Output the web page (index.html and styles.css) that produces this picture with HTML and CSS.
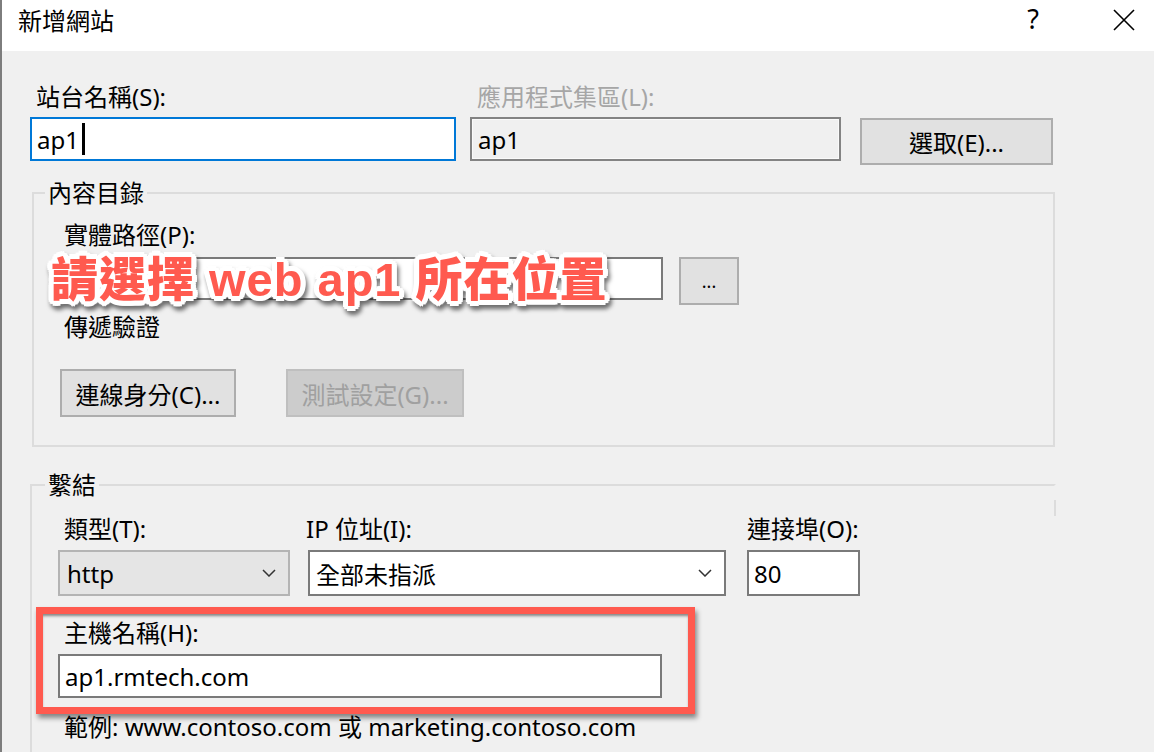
FILE: index.html
```html
<!DOCTYPE html>
<html lang="zh-Hant">
<head>
<meta charset="utf-8">
<title>新增網站</title>
<link rel="stylesheet" href="styles.css">
</head>
<body>
<div class="window">
  <div class="titlebar">
    <span class="title">新增網站</span>
    <div class="title-buttons">
      <span class="help">?</span>
      <span class="close"><svg width="22" height="22" viewBox="0 0 22 22"><path d="M1 1 L21 21 M21 1 L1 21" stroke="#000" stroke-width="1.6" fill="none"/></svg></span>
    </div>
  </div>
  <div class="content">
    <div class="row1">
      <div class="field site-name">
        <div class="lbl">站台名稱(S):</div>
        <div class="textbox focused">ap1<span class="caret"></span></div>
      </div>
      <div class="field app-pool">
        <div class="lbl disabled">應用程式集區(L):</div>
        <div class="textbox readonly">ap1</div>
      </div>
      <div class="btn select-btn">選取(E)...</div>
    </div>

    <fieldset class="group content-dir">
      <legend>內容目錄</legend>
      <div class="group-body">
        <div class="lbl path-lbl">實體路徑(P):</div>
        <div class="path-row">
          <div class="textbox path"></div>
          <div class="btn browse">...</div>
          <div class="callout">請選擇 web ap1 所在位置</div>
        </div>
        <div class="lbl pass-lbl">傳遞驗證</div>
        <div class="btn-row">
          <div class="btn connect">連線身分(C)...</div>
          <div class="btn disabled test">測試設定(G)...</div>
        </div>
      </div>
    </fieldset>

    <fieldset class="group binding">
      <legend>繫結</legend>
      <div class="group-body">
        <div class="binding-row">
          <div class="col type-col">
            <div class="lbl">類型(T):</div>
            <div class="combo gray">http<svg class="chev" width="14" height="8" viewBox="0 0 14 8"><path d="M1 1 L7 7 L13 1" stroke="#333" stroke-width="1.5" fill="none"/></svg></div>
          </div>
          <div class="col ip-col">
            <div class="lbl">IP 位址(I):</div>
            <div class="combo white">全部未指派<svg class="chev" width="14" height="8" viewBox="0 0 14 8"><path d="M1 1 L7 7 L13 1" stroke="#333" stroke-width="1.5" fill="none"/></svg></div>
          </div>
          <div class="col port-col">
            <div class="lbl">連接埠(O):</div>
            <div class="textbox port">80</div>
          </div>
        </div>
        <div class="host-box">
          <div class="lbl host-lbl">主機名稱(H):</div>
          <div class="textbox host">ap1.rmtech.com</div>
        </div>
        <div class="example">範例: www.contoso.com 或 marketing.contoso.com</div>
      </div>
    </fieldset>
  </div>
</div>
</body>
</html>
```

FILE: styles.css
```css
html, body {
  margin: 0;
  padding: 0;
}
body {
  width: 1154px;
  height: 752px;
  overflow: hidden;
  background: #f0f0f0;
  font-family: "Noto Sans", "Noto Sans CJK TC", sans-serif;
  font-size: 24px;
  color: #000;
}
.window {
  height: 752px;
  border-left: 2px solid #7d7d7d;
  box-sizing: border-box;
  overflow: hidden;
}
.titlebar {
  height: 51px;
  background: #fff;
  display: flex;
  justify-content: space-between;
  align-items: flex-start;
}
.title {
  margin-left: 16px;
  margin-top: 5px;
  line-height: 32px;
}
.title-buttons {
  display: flex;
  align-items: flex-start;
}
.help {
  margin-top: 2px;
  line-height: 34px;
  font-size: 27px;
  margin-right: 74px;
}
.close {
  margin-top: 9px;
  margin-right: 19px;
  display: block;
  height: 22px;
}
.close svg { display: block; }

.content {
  padding: 31px 0 0 28px;
}
.lbl {
  line-height: 30px;
  height: 30px;
  white-space: nowrap;
}
.lbl.disabled { color: #a6a6a6; }

.row1 {
  display: flex;
  align-items: flex-start;
}
.field .lbl { margin-bottom: 5px; padding-left: 6px; }
.site-name { width: 426px; }
.app-pool { width: 371px; margin-left: 14px; }
.app-pool .lbl { padding-left: 7px; }

.textbox {
  box-sizing: border-box;
  height: 44px;
  border: 2px solid #7a7a7a;
  background: #fff;
  display: flex;
  align-items: center;
  padding-left: 5px;
  white-space: nowrap;
}
.textbox.focused { border-color: #0078d7; }
.textbox.readonly { background: #f0f0f0; border-color: #838383; box-shadow: inset 0 0 0 1px #fafafa; padding-left: 6px; }
.caret {
  display: inline-block;
  width: 3px;
  height: 32px;
  background: #000;
  margin-left: 3px;
}

.btn {
  box-sizing: border-box;
  background: #e1e1e1;
  border: 2px solid #adadad;
  display: flex;
  align-items: center;
  justify-content: center;
  white-space: nowrap;
}
.btn.disabled {
  background: #cccccc;
  border-color: #bfbfbf;
  color: #a0a0a0;
}
.select-btn {
  width: 193px;
  height: 47px;
  margin-left: 19px;
  margin-top: 36px;
}

.group {
  margin: 0;
  padding: 0;
  border: 2px solid #dcdcdc;
  min-width: 0;
}
.group legend {
  padding: 0 3px;
  line-height: 30px;
}
.content-dir {
  margin: 13px 0 0 2px;
  width: 1023px;
  box-sizing: border-box;
}
.content-dir legend { margin-left: 11px; }
.content-dir .group-body {
  padding: 0 0 28px 26px;
}
.path-lbl { margin-top: 12px; padding-left: 4px; }
.path-row {
  position: relative;
  display: flex;
  align-items: flex-start;
  margin-top: 7px;
}
.textbox.path { width: 603px; height: 43px; }
.btn.browse {
  width: 60px;
  height: 48px;
  margin-left: 16px;
  align-items: flex-end;
  padding-bottom: 10px;
  font-size: 18px;
}
.pass-lbl { margin-top: 7px; padding-left: 4px; }
.btn-row {
  display: flex;
  margin-top: 27px;
}
.btn-row .btn { height: 48px; }
.btn.connect { width: 176px; }
.btn.test { width: 178px; margin-left: 50px; }

.callout {
  position: absolute;
  left: -9px;
  top: -4px;
  font-family: "Liberation Sans", "Noto Sans CJK TC", sans-serif;
  font-weight: 900;
  font-size: 47px;
  line-height: 54px;
  color: #ff5a4f;
  white-space: nowrap;
  letter-spacing: 1px;
  text-shadow:
    4px 0 0 #fff, -4px 0 0 #fff, 0 4px 0 #fff, 0 -4px 0 #fff,
    3px 3px 0 #fff, -3px 3px 0 #fff, 3px -3px 0 #fff, -3px -3px 0 #fff,
    5px 1px 0 #fff, -5px 1px 0 #fff, 1px 5px 0 #fff, 1px -5px 0 #fff,
    -1px 5px 0 #fff, -1px -5px 0 #fff, 5px -1px 0 #fff, -5px -1px 0 #fff,
    4px 3px 1px #fff, -4px 3px 1px #fff, 4px -3px 1px #fff, -4px -3px 1px #fff;
  filter: drop-shadow(2px 4px 2px rgba(0,0,0,0.55));
}

.binding {
  margin: 23px 0 0 0;
  width: 1026px;
  height: 300px;
  box-sizing: border-box;
  border-right-color: transparent;
  border-bottom: none;
  position: relative;
}
.binding::after {
  content: "";
  position: absolute;
  right: -2px;
  top: 0;
  width: 2px;
  height: 16px;
  background: #dcdcdc;
}
.binding legend { margin-left: 13px; }
.binding-row {
  display: flex;
  margin: 14px 0 0 26px;
}
.col .lbl { margin-bottom: 6px; }
.type-col { width: 232px; }
.type-col .lbl { padding-left: 6px; }
.ip-col { width: 418px; margin-left: 18px; }
.ip-col .lbl { margin-left: -2px; }
.port-col { width: 113px; margin-left: 21px; }

.combo {
  box-sizing: border-box;
  height: 46px;
  display: flex;
  align-items: center;
  justify-content: space-between;
  padding: 0 12px 0 6px;
  border: 2px solid #7a7a7a;
}
.combo.gray { background: #e5e5e5; border-color: #b4b4b4; padding-left: 7px; }
.combo.white { background: #fff; }
.textbox.port { height: 46px; }

.host-box {
  margin: 11px 0 0 4px;
  width: 659px;
  box-sizing: border-box;
  border: 7px solid #ff5a4f;
  padding: 4px 26px 9px 15px;
  box-shadow: 2px 4px 5px rgba(0,0,0,0.45), inset 0 3px 3px -1px rgba(0,0,0,0.45);
}
.host-lbl { padding-left: 6px; margin-bottom: 6px; }
.textbox.host { width: 604px; height: 44px; }
.example {
  margin-left: 32px;
  line-height: 26px;
  white-space: nowrap;
}
```
